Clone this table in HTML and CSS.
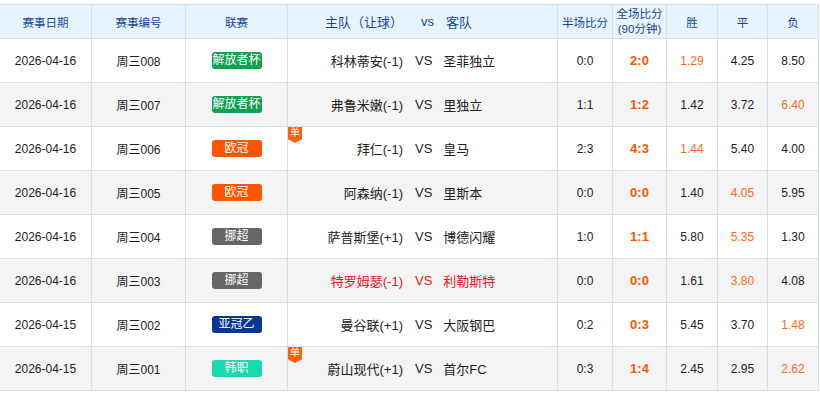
FILE: index.html
```html
<!DOCTYPE html>
<html lang="zh-CN">
<head>
<meta charset="utf-8">
<title>赛事列表</title>
<link rel="stylesheet" href="styles.css">
</head>
<body>
<div class="grid">
  <div class="row head">
    <div class="c">赛事日期</div>
    <div class="c">赛事编号</div>
    <div class="c">联赛</div>
    <div class="c match mh"><span class="home">主队（让球）</span><span class="vs">vs</span><span class="away">客队</span></div>
    <div class="c">半场比分</div>
    <div class="c two">全场比分<br>(90分钟)</div>
    <div class="c">胜</div>
    <div class="c">平</div>
    <div class="c">负</div>
  </div>

  <div class="row">
    <div class="c">2026-04-16</div>
    <div class="c">周三008</div>
    <div class="c"><span class="lg g">解放者杯</span></div>
    <div class="c match"><span class="home">科林蒂安(-1)</span><span class="vs">VS</span><span class="away">圣菲独立</span></div>
    <div class="c">0:0</div>
    <div class="c score">2:0</div>
    <div class="c hi">1.29</div>
    <div class="c">4.25</div>
    <div class="c">8.50</div>
  </div>

  <div class="row alt">
    <div class="c">2026-04-16</div>
    <div class="c">周三007</div>
    <div class="c"><span class="lg g">解放者杯</span></div>
    <div class="c match"><span class="home">弗鲁米嫩(-1)</span><span class="vs">VS</span><span class="away">里独立</span></div>
    <div class="c">1:1</div>
    <div class="c score">1:2</div>
    <div class="c">1.42</div>
    <div class="c">3.72</div>
    <div class="c hi">6.40</div>
  </div>

  <div class="row">
    <div class="c">2026-04-16</div>
    <div class="c">周三006</div>
    <div class="c"><span class="lg o">欧冠</span></div>
    <div class="c match"><span class="dan">单</span><span class="home">拜仁(-1)</span><span class="vs">VS</span><span class="away">皇马</span></div>
    <div class="c">2:3</div>
    <div class="c score">4:3</div>
    <div class="c hi">1.44</div>
    <div class="c">5.40</div>
    <div class="c">4.00</div>
  </div>

  <div class="row alt">
    <div class="c">2026-04-16</div>
    <div class="c">周三005</div>
    <div class="c"><span class="lg o">欧冠</span></div>
    <div class="c match"><span class="home">阿森纳(-1)</span><span class="vs">VS</span><span class="away">里斯本</span></div>
    <div class="c">0:0</div>
    <div class="c score">0:0</div>
    <div class="c">1.40</div>
    <div class="c hi">4.05</div>
    <div class="c">5.95</div>
  </div>

  <div class="row">
    <div class="c">2026-04-16</div>
    <div class="c">周三004</div>
    <div class="c"><span class="lg k">挪超</span></div>
    <div class="c match"><span class="home">萨普斯堡(+1)</span><span class="vs">VS</span><span class="away">博德闪耀</span></div>
    <div class="c">1:0</div>
    <div class="c score">1:1</div>
    <div class="c">5.80</div>
    <div class="c hi">5.35</div>
    <div class="c">1.30</div>
  </div>

  <div class="row alt">
    <div class="c">2026-04-16</div>
    <div class="c">周三003</div>
    <div class="c"><span class="lg k">挪超</span></div>
    <div class="c match red"><span class="home">特罗姆瑟(-1)</span><span class="vs">VS</span><span class="away">利勒斯特</span></div>
    <div class="c">0:0</div>
    <div class="c score">0:0</div>
    <div class="c">1.61</div>
    <div class="c hi">3.80</div>
    <div class="c">4.08</div>
  </div>

  <div class="row">
    <div class="c">2026-04-15</div>
    <div class="c">周三002</div>
    <div class="c"><span class="lg n">亚冠乙</span></div>
    <div class="c match"><span class="home">曼谷联(+1)</span><span class="vs">VS</span><span class="away">大阪钢巴</span></div>
    <div class="c">0:2</div>
    <div class="c score">0:3</div>
    <div class="c">5.45</div>
    <div class="c">3.70</div>
    <div class="c hi">1.48</div>
  </div>

  <div class="row alt">
    <div class="c">2026-04-15</div>
    <div class="c">周三001</div>
    <div class="c"><span class="lg t">韩职</span></div>
    <div class="c match"><span class="dan">单</span><span class="home">蔚山现代(+1)</span><span class="vs">VS</span><span class="away">首尔FC</span></div>
    <div class="c">0:3</div>
    <div class="c score">1:4</div>
    <div class="c">2.45</div>
    <div class="c">2.95</div>
    <div class="c hi">2.62</div>
  </div>
</div>
</body>
</html>
```

FILE: styles.css
```css
html, body {
  margin: 0;
  padding: 0;
  background: #ffffff;
}
body {
  font-family: "Liberation Sans", "Noto Sans CJK SC", sans-serif;
  font-size: 12px;
  color: #222222;
}
.grid {
  margin-top: 4px;
  width: 818px;
  display: grid;
  grid-template-columns: 91px 93px 101px 269px 54px 53px 50px 49px 50px;
  grid-auto-rows: 43px;
  grid-template-rows: 33px;
  gap: 1px;
  padding: 1px 1px 1px 0;
  background: #cfe1f1;
}
.row {
  display: contents;
}
.c {
  background: #ffffff;
  display: flex;
  align-items: center;
  justify-content: center;
  text-align: center;
  position: relative;
}
.row.alt .c {
  background: #f4f4f4;
}
.row.head .c {
  background: #e7f4fd;
  color: #17479a;
  font-size: 11.5px;
}
.row.head .two {
  line-height: 15px;
}
.row.head .mh {
  font-size: 13px;
}
.match {
  justify-content: flex-start;
  font-size: 13px;
}
.match .home {
  width: 115px;
  text-align: right;
  white-space: nowrap;
}
.match .vs {
  margin: 0 11px 0 12px;
}
.mh .vs {
  margin: 0 12px 0 18px;
}
.match .away {
  white-space: nowrap;
}
.match.red {
  color: #e8141e;
}
.score {
  font-weight: bold;
  font-size: 13px;
  color: #ff5500;
}
.hi {
  color: #ff6a1a;
}
.lg {
  display: inline-block;
  width: 50px;
  height: 17px;
  line-height: 17px;
  border-radius: 3px;
  color: #ffffff;
  font-size: 12px;
}
.lg.g { background: #10a152; }
.lg.o { background: #ff5400; }
.lg.k { background: #666666; }
.lg.n { background: #0b3592; }
.lg.t { background: #1bd9ae; }
.dan {
  position: absolute;
  left: 0;
  top: 0;
  width: 14px;
  height: 16px;
  background: #ff600a;
  color: #ffffff;
  font-size: 10px;
  line-height: 12px;
  text-align: center;
  clip-path: polygon(0 0, 100% 0, 100% 76%, 50% 100%, 0 76%);
}
```
